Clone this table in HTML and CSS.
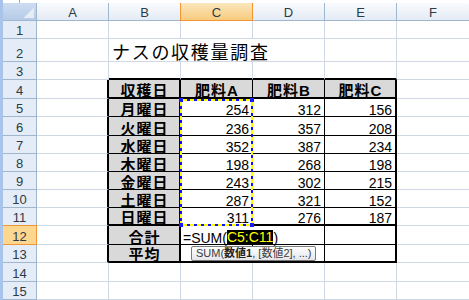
FILE: index.html
```html
<!DOCTYPE html>
<html lang="ja">
<head>
<meta charset="utf-8">
<title>ナスの収穫量調査</title>
<link rel="stylesheet" href="styles.css">
</head>
<body>
<div class="app">
  <div class="topbar"><div class="namebox"></div></div>
  <div class="sheet">
    <!-- header -->
    <div class="corner"></div>
    <div class="ch">A</div>
    <div class="ch">B</div>
    <div class="ch sel">C</div>
    <div class="ch">D</div>
    <div class="ch">E</div>
    <div class="ch last">F</div>
    <!-- row 1 -->
    <div class="rh">1</div><div class="c"></div><div class="c"></div><div class="c"></div><div class="c"></div><div class="c"></div><div class="c last"></div>
    <!-- row 2 -->
    <div class="rh">2</div><div class="c"></div><div class="c title">ナスの収穫量調査</div><div class="c"></div><div class="c last"></div>
    <!-- row 3 -->
    <div class="rh">3</div><div class="c"></div><div class="c edgeT"></div><div class="c edgeT"></div><div class="c edgeT"></div><div class="c edgeT"></div><div class="c last"></div>
    <!-- row 4 -->
    <div class="rh">4</div><div class="c edgeL"></div>
    <div class="t g tr2 tb2">収穫日</div>
    <div class="t g tb2">肥料A</div>
    <div class="t g tb2">肥料B</div>
    <div class="t g tr2 tb2">肥料C</div>
    <div class="c last"></div>
    <!-- row 5 -->
    <div class="rh">5</div><div class="c edgeL"></div>
    <div class="t g tr2">月曜日</div>
    <div class="t n anchor">254
      <div class="range"><span class="h h1"></span><span class="h h2"></span><span class="h h3"></span><span class="h h4"></span></div>
    </div>
    <div class="t n">312</div>
    <div class="t n tr2">156</div>
    <div class="c last"></div>
    <!-- row 6 -->
    <div class="rh">6</div><div class="c edgeL"></div>
    <div class="t g tr2">火曜日</div><div class="t n">236</div><div class="t n">357</div><div class="t n tr2">208</div>
    <div class="c last"></div>
    <!-- row 7 -->
    <div class="rh">7</div><div class="c edgeL"></div>
    <div class="t g tr2">水曜日</div><div class="t n">352</div><div class="t n">387</div><div class="t n tr2">234</div>
    <div class="c last"></div>
    <!-- row 8 -->
    <div class="rh">8</div><div class="c edgeL"></div>
    <div class="t g tr2">木曜日</div><div class="t n">198</div><div class="t n">268</div><div class="t n tr2">198</div>
    <div class="c last"></div>
    <!-- row 9 -->
    <div class="rh">9</div><div class="c edgeL"></div>
    <div class="t g tr2">金曜日</div><div class="t n">243</div><div class="t n">302</div><div class="t n tr2">215</div>
    <div class="c last"></div>
    <!-- row 10 -->
    <div class="rh">10</div><div class="c edgeL"></div>
    <div class="t g tr2">土曜日</div><div class="t n">287</div><div class="t n">321</div><div class="t n tr2">152</div>
    <div class="c last"></div>
    <!-- row 11 -->
    <div class="rh">11</div><div class="c edgeL"></div>
    <div class="t g tr2 tb2">日曜日</div><div class="t n tb2">311</div><div class="t n tb2">276</div><div class="t n tr2 tb2">187</div>
    <div class="c last"></div>
    <!-- row 12 -->
    <div class="rh sel">12</div><div class="c edgeL"></div>
    <div class="t g tr2">合計</div>
    <div class="t formula">=SUM(<span class="hl">C5:C11</span>)</div>
    <div class="t tr2"></div>
    <div class="c last"></div>
    <!-- row 13 -->
    <div class="rh">13</div><div class="c edgeL"></div>
    <div class="t g tr2 tb2">平均</div>
    <div class="t tb2 anchor"><div class="tip">SUM(<b>数値1</b>, [数値2], ...)</div></div>
    <div class="t tb2"></div>
    <div class="t tr2 tb2"></div>
    <div class="c last"></div>
    <!-- row 14 -->
    <div class="rh">14</div><div class="c"></div><div class="c"></div><div class="c"></div><div class="c"></div><div class="c"></div><div class="c last"></div>
    <!-- row 15 -->
    <div class="rh">15</div><div class="c"></div><div class="c"></div><div class="c"></div><div class="c"></div><div class="c"></div><div class="c last"></div>
  </div>
</div>
</body>
</html>
```
FILE: styles.css
```css
html, body {
  margin: 0;
  padding: 0;
  background: #ffffff;
}
body {
  width: 469px;
  height: 300px;
  overflow: hidden;
  font-family: "Liberation Sans", "Noto Sans CJK JP", sans-serif;
  color: #000;
}
.app {
  height: 300px;
  box-sizing: border-box;
  border-left: 3px solid #a9c4ea;
  display: flex;
  flex-direction: column;
}
.topbar {
  height: 3px;
  flex: none;
  background: #ffffff;
}
.namebox {
  width: 17px;
  height: 3px;
  box-sizing: border-box;
  border-right: 1px solid #a5acb5;
}
.sheet {
  flex: 1;
  display: grid;
  grid-template-columns: 34px repeat(5, 72px) 1fr;
  grid-template-rows: 18px 18px 23px 18px 19px 18px 19px 18px 18px 18px 18px 18px 19px 18px 19px 18px;
}
.sheet > div {
  box-sizing: border-box;
  min-width: 0;
  border-right: 1px solid #d0d7e5;
  border-bottom: 1px solid #d0d7e5;
  display: flex;
  align-items: flex-end;
  white-space: nowrap;
  font-size: 14px;
  line-height: 12px;
}
.sheet > .last {
  border-right: none;
}
/* headers */
.sheet > .corner {
  border-right-color: #9eb6ce;
  border-bottom-color: #9eb6ce;
  background:
    linear-gradient(135deg, transparent 50%, #e6ecf4 50%) right 2px bottom 2px / 10px 10px no-repeat,
    linear-gradient(#cddcf1, #b6cbe8);
}
.sheet > .ch {
  background: linear-gradient(#f9fbfd, #e4ebf5);
  border-right-color: #9eb6ce;
  border-bottom-color: #9eb6ce;
  justify-content: center;
  align-items: center;
  padding-top: 2px;
  font-size: 13px;
  color: #2d3b45;
}
.sheet > .ch.sel {
  background: linear-gradient(#fbe6bd, #f7cb7d);
  border-right-color: #f29536;
  border-bottom-color: #f29536;
  box-shadow: -1px 0 0 #f29536;
}
.sheet > .rh {
  background: #e4ecf7;
  border-right-color: #9eb6ce;
  border-bottom-color: #9eb6ce;
  justify-content: center;
  font-size: 13px;
  color: #2d3b45;
  padding-bottom: 1px;
}
.sheet > .rh.sel {
  background: #fdd690;
  border-right-color: #f29536;
  border-bottom-color: #f29536;
  box-shadow: 0 -1px 0 #f29536;
}
/* cells */
.sheet > .title {
  grid-column: span 3;
  font-size: 18px;
  letter-spacing: 1.7px;
  line-height: 15px;
  padding-left: 3px;
}
.sheet > .edgeT {
  border-bottom: 2px solid #000;
}
.sheet > .edgeL {
  border-right: 2px solid #000;
}
.sheet > .t {
  border-right-color: #000;
  border-bottom-color: #000;
}
.sheet > .tr2 {
  border-right-width: 2px;
}
.sheet > .tb2 {
  border-bottom-width: 2px;
}
.sheet > .g {
  background: #d9d9d9;
  justify-content: center;
  font-weight: bold;
  font-size: 15px;
  letter-spacing: 1px;
  padding-left: 1px;
}
.sheet > .n {
  justify-content: flex-end;
  padding-right: 3px;
}
.sheet > .formula {
  grid-column: span 2;
  padding-left: 2px;
  background: #fff;
}
.hl {
  display: inline-block;
  background: #000;
  color: #ffff00;
  line-height: 14px;
}
.sheet > .anchor {
  position: relative;
  z-index: 2;
}
.range {
  position: absolute;
  left: -1px;
  top: 0;
  width: 73px;
  height: 127px;
  background:
    repeating-linear-gradient(90deg, #1010ff 0 3px, #ffff00 3px 7px) left top / 100% 2px no-repeat,
    repeating-linear-gradient(90deg, #1010ff 0 3px, #ffff00 3px 7px) left bottom / 100% 2px no-repeat,
    repeating-linear-gradient(180deg, #1010ff 0 3px, #ffff00 3px 7px) left top / 2px 100% no-repeat,
    repeating-linear-gradient(180deg, #1010ff 0 3px, #ffff00 3px 7px) right top / 2px 100% no-repeat;
}
.h {
  position: absolute;
  width: 4px;
  height: 4px;
  background: #1a1aff;
}
.h1 { left: -1px; top: -1px; }
.h2 { right: -1px; top: -1px; }
.h3 { left: -1px; bottom: -1px; }
.h4 { right: -1px; bottom: -1px; }
.tip {
  position: absolute;
  left: 10px;
  top: 1px;
  height: 15px;
  box-sizing: border-box;
  padding: 0 3px 0 4px;
  border: 1px solid #7a7a7a;
  border-radius: 2px;
  background: linear-gradient(#ffffff, #e4e6ec);
  font-size: 11px;
  line-height: 13px;
  color: #3a3a3a;
  white-space: nowrap;
}
.tip b {
  font-weight: bold;
  color: #222;
}
```
